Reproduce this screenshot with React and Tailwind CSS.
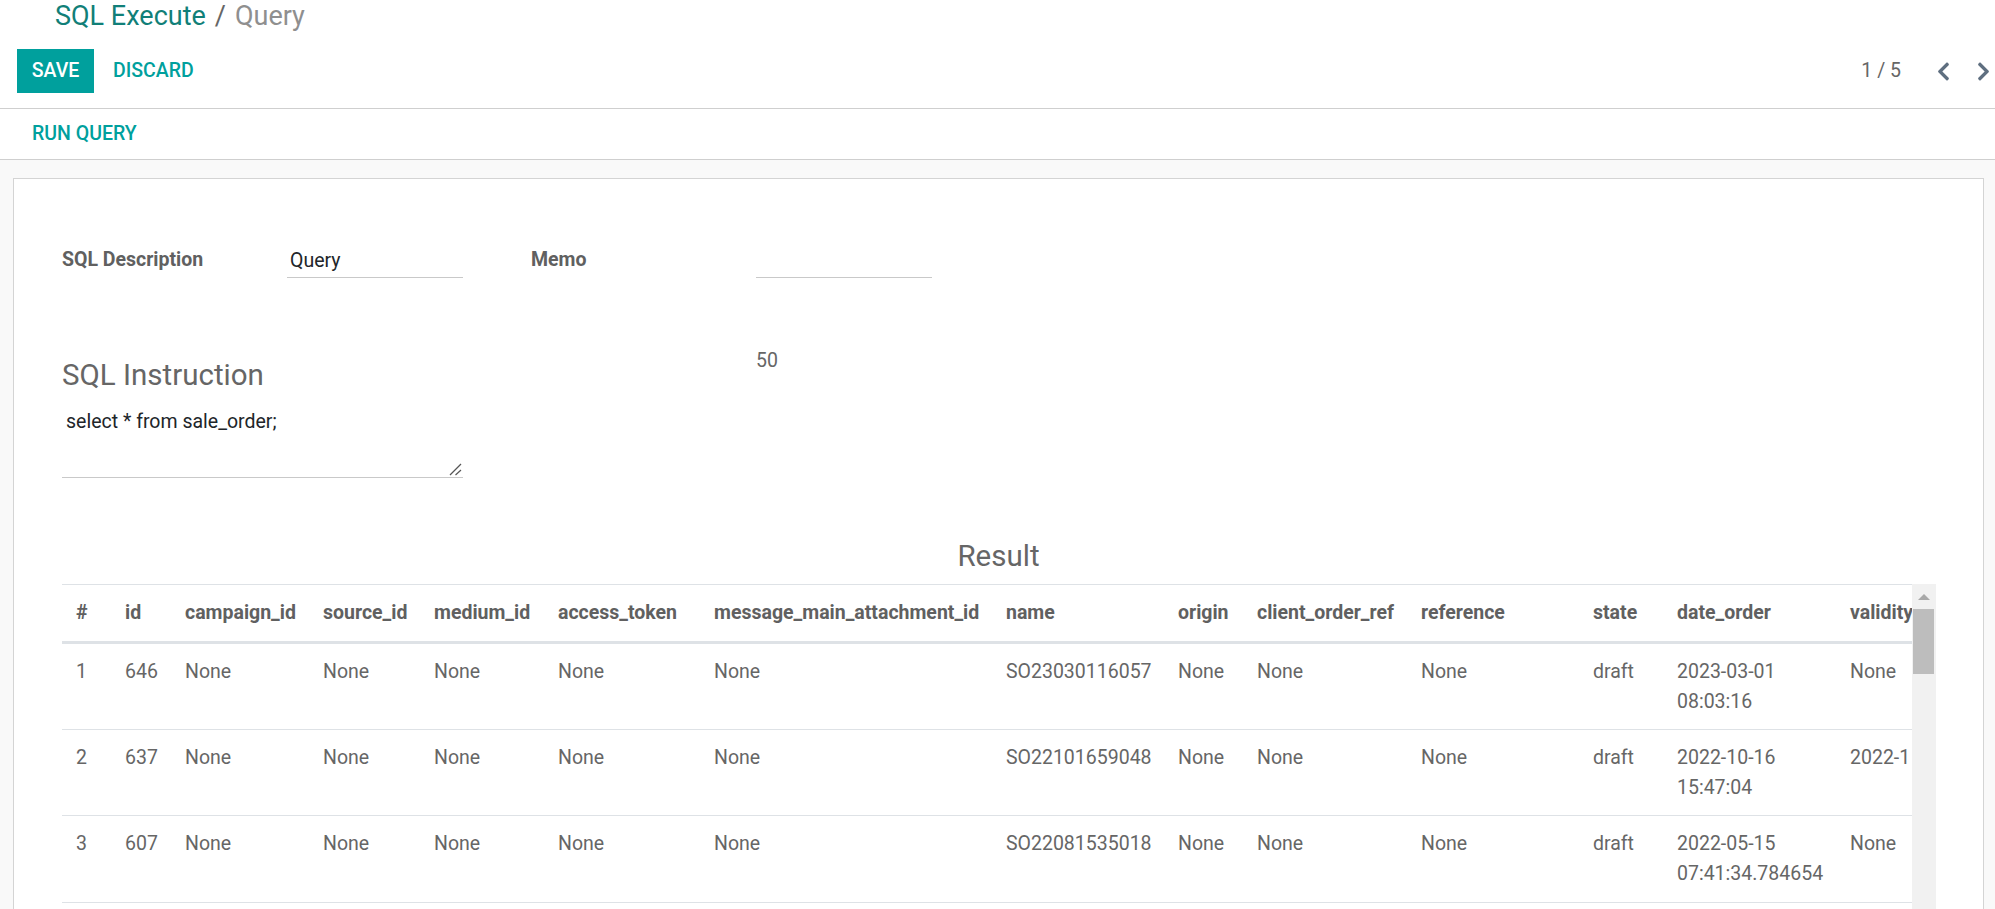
import React from "react";
import { FaChevronLeft, FaChevronRight } from "react-icons/fa";

const columns = [
  ["#", "w-[49px]"],
  ["id", "w-[60px]"],
  ["campaign_id", "w-[138px]"],
  ["source_id", "w-[111px]"],
  ["medium_id", "w-[124px]"],
  ["access_token", "w-[156px]"],
  ["message_main_attachment_id", "w-[292px]"],
  ["name", "w-[172px]"],
  ["origin", "w-[79px]"],
  ["client_order_ref", "w-[164px]"],
  ["reference", "w-[172px]"],
  ["state", "w-[84px]"],
  ["date_order", "w-[173px]"],
  ["validity", "w-[154px]"],
];

const rows = [
  ["1", "646", "None", "None", "None", "None", "None", "SO23030116057", "None", "None", "None", "draft", "2023-03-01 08:03:16", "None"],
  ["2", "637", "None", "None", "None", "None", "None", "SO22101659048", "None", "None", "None", "draft", "2022-10-16 15:47:04", "2022-1"],
  ["3", "607", "None", "None", "None", "None", "None", "SO22081535018", "None", "None", "None", "draft", "2022-05-15 07:41:34.784654", "None"],
];

function ResultTable() {
  return (
    <div className="flex">
      <div className="w-[1850px] shrink-0 overflow-hidden">
        <table className="w-[1928px] table-fixed border-collapse text-left text-[19.5px] leading-[30px]">
          <colgroup>
            {columns.map(([name, width]) => (
              <col key={name} className={width} />
            ))}
          </colgroup>
          <thead>
            <tr className="h-[58px] border-t border-b-[3px] border-[#dee2e6]">
              {columns.map(([name]) => (
                <th key={name} className="px-[14px] align-middle font-bold whitespace-nowrap text-[#606060]">
                  {name}
                </th>
              ))}
            </tr>
          </thead>
          <tbody>
            {rows.map((row) => (
              <tr key={row[0]} className="h-[86.5px] border-b border-[#dee2e6]">
                {row.map((cell, i) => (
                  <td key={i} className="px-[14px] pt-[13px] align-top text-[#666]">
                    {cell}
                  </td>
                ))}
              </tr>
            ))}
          </tbody>
        </table>
      </div>
      <div className="flex h-[330px] w-6 shrink-0 flex-col bg-[#f1f1f1]">
        <svg className="mx-auto mt-[10px]" width="12" height="6" viewBox="0 0 12 6">
          <path d="M6 0L12 6H0Z" fill="#a8a8a8" />
        </svg>
        <div className="mt-[9px] ml-px h-[65px] w-[21px] bg-[#bdbdbd]" />
      </div>
    </div>
  );
}

export default function App() {
  return (
    <div className="h-[909px] overflow-hidden bg-[#f9f9f9] font-['Roboto',sans-serif] text-[19.5px] text-[#666]">
      <header className="bg-white">
        <div className="h-[109px] border-b border-[#cfcfcf]">
          <div className="pl-[55px] text-[27px] leading-[32px]">
            <a className="text-[#117f78]">SQL Execute</a>
            <span className="mx-[9px] text-[#666]">/</span>
            <span className="text-[#8f8f8f]">Query</span>
          </div>
          <div className="mt-[17px] flex items-center pr-[1px] pl-[17px]">
            <button className="h-[44px] w-[77px] bg-[#00a09d] font-medium text-white">SAVE</button>
            <button className="ml-[19px] font-medium text-[#00a09d]">DISCARD</button>
            <span className="ml-auto text-[#666]">1 / 5</span>
            <FaChevronLeft className="ml-[32px] text-[#5f6f80]" size={21} />
            <FaChevronRight className="ml-[19px] text-[#5f6f80]" size={21} />
          </div>
        </div>
        <div className="flex h-[51px] items-center border-b border-[#cfcfcf] pl-[32px]">
          <button className="font-medium text-[#00a09d]">RUN QUERY</button>
        </div>
      </header>

      <main className="mt-[18px] mr-[11px] ml-[13px] h-[800px] border border-[#d4d4d4] bg-white px-[48px] pt-[69px]">
        <div className="grid grid-cols-[225px_244px_225px_176px] items-start">
          <label className="-mt-[3px] font-bold text-[#606060]">SQL Description</label>
          <input
            className="h-[30px] w-[176px] border-b border-[#c9c9c9] px-[3px] pb-[5px] text-[#212529] outline-none"
            defaultValue="Query"
          />
          <label className="-mt-[3px] font-bold text-[#606060]">Memo</label>
          <input className="h-[30px] w-[176px] border-b border-[#c9c9c9] outline-none" />
        </div>

        <div className="mt-[68px] flex">
          <div className="w-[694px]">
            <h2 className="mt-[12px] text-[29.5px] leading-[34px] text-[#666]">SQL Instruction</h2>
            <div className="relative mt-[12px] w-[401px]">
              <textarea
                className="block h-[74px] w-full resize-none border-b border-[#c9c9c9] px-1 pt-[3px] text-[#212529] outline-none"
                defaultValue="select * from sale_order;"
              />
              <svg className="absolute right-0 bottom-[1px]" width="14" height="14" viewBox="0 0 14 14" fill="none" stroke="#555" strokeWidth="1.2">
                <path d="M1 12L12 1" />
                <path d="M6.5 12L12 7" />
              </svg>
            </div>
          </div>
          <div className="leading-[29px] text-[#666]">50</div>
        </div>

        <h2 className="mt-[61px] text-center text-[29.5px] leading-[34px] text-[#666]">Result</h2>
        <div className="mt-[11px]">
          <ResultTable />
        </div>
      </main>
    </div>
  );
}
